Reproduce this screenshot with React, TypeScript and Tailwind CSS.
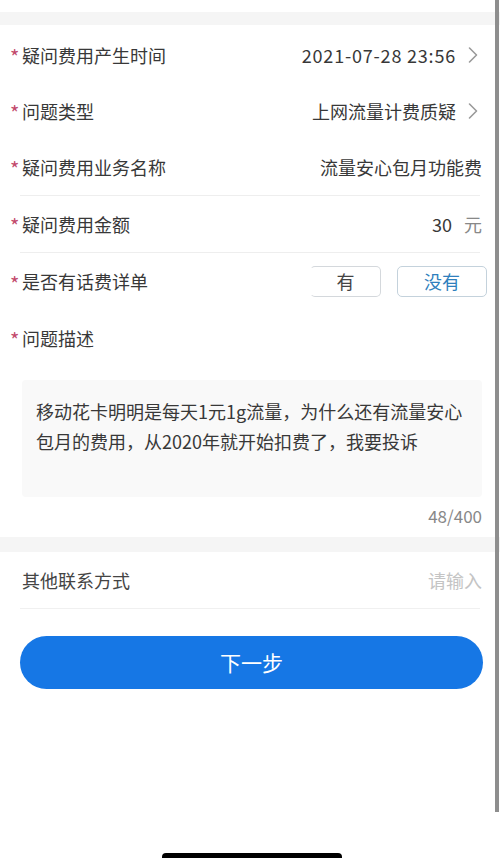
import React from "react";

const Chevron = () => (
  <svg width="10" height="18" viewBox="0 0 10 18" className="ml-[12px]">
    <polyline points="1.5,2 8.5,9 1.5,16" fill="none" stroke="#9a9a9a" strokeWidth="1.6" strokeLinecap="round" strokeLinejoin="round" />
  </svg>
);

const Label = ({ text, star = true }: { text: string; star?: boolean }) => (
  <div className="flex items-center text-[18px] text-[#383838]">
    {star && <span className="w-[12px] text-[#c24a6c] text-[20px] leading-none pt-[4px]">*</span>}
    <span>{text}</span>
  </div>
);

export default function App() {
  return (
    <div
      className="relative w-[500px] h-[858px] bg-white overflow-hidden"
      style={{ fontFamily: '"Noto Sans CJK SC", "Noto Sans", sans-serif' }}
    >
      <div className="h-[12px] bg-white" />
      <div className="h-[13px] bg-[#f5f5f5]" />
      <div className="h-[2px]" />

      {/* Row 1 */}
      <div className="h-[56px] flex items-center justify-between pl-[10px] pr-[22px]">
        <Label text="疑问费用产生时间" />
        <div className="flex items-center text-[18px] text-[#383838] tracking-[0.8px]">
          <span>2021-07-28 23:56</span>
          <Chevron />
        </div>
      </div>

      {/* Row 2 */}
      <div className="h-[56px] flex items-center justify-between pl-[10px] pr-[22px]">
        <Label text="问题类型" />
        <div className="flex items-center text-[18px] text-[#383838]">
          <span>上网流量计费质疑</span>
          <Chevron />
        </div>
      </div>

      {/* Row 3 */}
      <div className="h-[56px] flex items-center justify-between pl-[10px] pr-[18px]">
        <Label text="疑问费用业务名称" />
        <span className="text-[18px] text-[#383838]">流量安心包月功能费</span>
      </div>
      <div className="mx-[20px] h-px bg-[#eeeeee]" />

      {/* Row 4 */}
      <div className="h-[56px] flex items-center justify-between pl-[10px] pr-[18px]">
        <Label text="疑问费用金额" />
        <div className="flex items-center text-[18px]">
          <span className="text-[#383838]">30</span>
          <span className="text-[#888] ml-[12px]">元</span>
        </div>
      </div>
      <div className="mx-[20px] h-px bg-[#eeeeee]" />

      {/* Row 5 */}
      <div className="h-[57px] flex items-center justify-between pl-[10px] pr-[13px]">
        <Label text="是否有话费详单" />
        <div className="flex items-center gap-[16px]">
          <div className="w-[71px] h-[31px] rounded-[5px] border border-[#d4d8dc] border-l-transparent flex items-center justify-center text-[18px] text-[#444]">
            有
          </div>
          <div className="w-[90px] h-[31px] rounded-[5px] border border-[#c4d2dc] flex items-center justify-center text-[18px] text-[#2f7fbd]">
            没有
          </div>
        </div>
      </div>

      {/* Row 6 */}
      <div className="h-[56px] flex items-center pl-[10px]">
        <Label text="问题描述" />
      </div>

      <div className="h-[14px]" />
      <div className="mx-[22px] mr-[18px] h-[117px] bg-[#f9f9f9] rounded-[4px] px-[14px] pt-[16px] text-[18px] leading-[30px] text-[#383838]">
        移动花卡明明是每天1元1g流量，为什么还有流量安心包月的费用，从2020年就开始扣费了，我要投诉
      </div>
      <div className="h-[38px] flex items-center justify-end pr-[18px] text-[17px] text-[#888]">48/400</div>

      <div className="h-[2px]" />
      <div className="h-[15px] bg-[#f5f5f5]" />

      {/* Contact */}
      <div className="h-[56px] flex items-center justify-between pl-[22px] pr-[18px]">
        <span className="text-[18px] text-[#444]">其他联系方式</span>
        <span className="text-[18px] text-[#c4c4c4]">请输入</span>
      </div>
      <div className="mx-[20px] h-px bg-[#f0f0f0]" />

      <div className="h-[27px]" />
      <div className="mx-[20px] mr-[17px] h-[53px] rounded-full bg-[#1677e5] flex items-center justify-center text-[21px] text-white">
        下一步
      </div>

      {/* scrollbar */}
      <div className="absolute left-[495px] top-0 w-[4px] h-[812px] bg-[#8e8e8e]" />
      {/* home indicator */}
      <div className="absolute left-[162px] top-[853px] w-[180px] h-[8px] rounded-full bg-black" />
    </div>
  );
}
